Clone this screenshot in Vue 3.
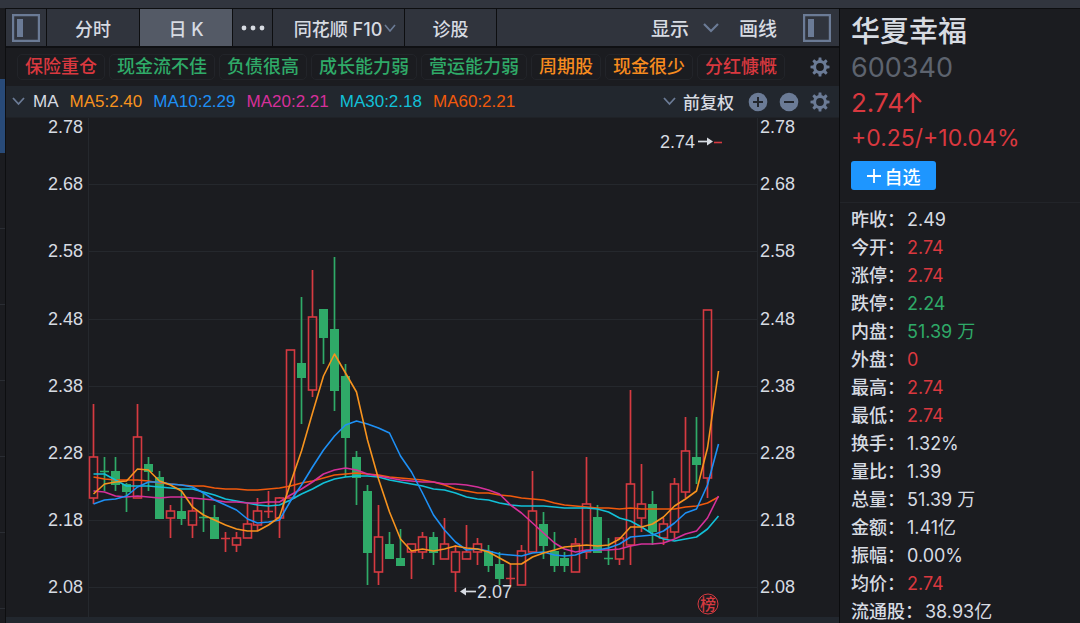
<script setup>
const tabs = [
  { label: '分时', cls: 'w-time' },
  { label: '日 K', cls: 'w-day', active: true },
  { label: '', cls: 'w-more', dots: true },
  { label: '同花顺 F10', cls: 'w-f10', caret: true },
  { label: '诊股', cls: 'w-diag' },
]

const tags = [
  ['保险重仓', 'red'],
  ['现金流不佳', 'green'],
  ['负债很高', 'green'],
  ['成长能力弱', 'green'],
  ['营运能力弱', 'green'],
  ['周期股', 'orange'],
  ['现金很少', 'orange'],
  ['分红慷慨', 'red'],
]

const legend = [
  ['MA5:2.40', 'ma5'],
  ['MA10:2.29', 'ma10'],
  ['MA20:2.21', 'ma20'],
  ['MA30:2.18', 'ma30'],
  ['MA60:2.21', 'ma60'],
]

const quotes = [
  ['昨收', '2.49', ''],
  ['今开', '2.74', 'red'],
  ['涨停', '2.74', 'red'],
  ['跌停', '2.24', 'green'],
  ['内盘', '51.39 万', 'green'],
  ['外盘', '0', 'red'],
  ['最高', '2.74', 'red'],
  ['最低', '2.74', 'red'],
  ['换手', '1.32%', ''],
  ['量比', '1.39', ''],
  ['总量', '51.39 万', ''],
  ['金额', '1.41亿', ''],
  ['振幅', '0.00%', ''],
  ['均价', '2.74', 'red'],
  ['流通股', '38.93亿', ''],
]

const axis = [
  ['2.78', 127],
  ['2.68', 184],
  ['2.58', 251],
  ['2.48', 319],
  ['2.38', 386],
  ['2.28', 453],
  ['2.18', 520],
  ['2.08', 587],
]

// direction, high, body top, body bottom, low
const candles = [
  ['r', 404, 457, 498, 504], ['g', 457, 471, 472, 491], ['g', 457, 471, 485, 491], ['g', 483, 484, 492, 512],
  ['r', 404, 437, 498, 498], ['g', 457, 464, 472, 491], ['g', 471, 477, 519, 519], ['r', 505, 511, 518, 538],
  ['g', 491, 511, 519, 525], ['r', 498, 511, 525, 538], ['g', 492, 517, 518, 532], ['g', 505, 517, 539, 539],
  ['r', 532, 538, 539, 552], ['r', 532, 538, 545, 552], ['r', 504, 524, 538, 538], ['r', 498, 511, 525, 531],
  ['r', 491, 511, 512, 518], ['r', 497, 498, 518, 538], ['r', 350, 350, 498, 498], ['g', 297, 363, 378, 424],
  ['r', 270, 317, 390, 397], ['g', 309, 309, 338, 364], ['g', 257, 329, 391, 411], ['g', 364, 376, 438, 477],
  ['g', 451, 457, 478, 505], ['g', 485, 491, 553, 585], ['r', 505, 537, 572, 585], ['g', 532, 544, 559, 559],
  ['g', 529, 558, 566, 566], ['r', 544, 544, 552, 579], ['r', 532, 537, 552, 559], ['g', 532, 537, 553, 565],
  ['r', 518, 544, 559, 559], ['r', 545, 552, 572, 592], ['r', 525, 552, 559, 559], ['r', 538, 544, 552, 565],
  ['g', 545, 551, 566, 572], ['g', 552, 564, 579, 585], ['r', 564, 578, 579, 585], ['r', 545, 551, 585, 585],
  ['r', 471, 511, 552, 552], ['g', 512, 524, 546, 559], ['g', 532, 551, 566, 572], ['g', 552, 558, 566, 572],
  ['r', 538, 544, 572, 572], ['r', 457, 504, 552, 559], ['g', 505, 517, 553, 553], ['g', 538, 558, 559, 565],
  ['r', 537, 538, 559, 565], ['r', 390, 484, 545, 565], ['r', 464, 504, 518, 532], ['g', 491, 504, 532, 545],
  ['r', 518, 524, 538, 545], ['r', 478, 484, 532, 538], ['r', 417, 451, 492, 498], ['g', 417, 457, 465, 484],
  ['r', 310, 310, 478, 498],
]

const averages = {
  ma60: [477, 479, 480, 480, 480, 481, 483, 484, 485, 486, 486, 488, 489, 489, 490, 490, 489, 488, 486, 483, 481, 478, 475, 474, 473, 474, 475, 477, 478, 479, 480, 482, 485, 489, 491, 493, 493, 495, 496, 498, 499, 500, 503, 505, 506, 507, 508, 508, 509, 508, 509, 509, 509, 509, 507, 506, 503, 497],
  ma30: [474, 474, 480, 486, 486, 486, 487, 488, 489, 489, 492, 495, 499, 501, 503, 505, 506, 505, 500, 494, 489, 483, 479, 477, 476, 476, 477, 480, 482, 484, 486, 489, 490, 493, 497, 499, 500, 503, 505, 506, 506, 506, 507, 508, 508, 508, 509, 512, 518, 521, 527, 534, 539, 541, 539, 537, 529, 516],
  ma20: [491, 492, 496, 497, 496, 497, 498, 497, 497, 498, 499, 500, 502, 502, 503, 503, 502, 502, 495, 489, 482, 474, 470, 468, 470, 474, 476, 478, 480, 481, 482, 482, 484, 484, 485, 487, 490, 494, 505, 513, 523, 533, 543, 549, 552, 550, 550, 550, 549, 546, 544, 544, 543, 539, 534, 531, 518, 496],
  ma10: [504, 500, 499, 496, 487, 482, 482, 484, 485, 487, 493, 500, 505, 510, 519, 523, 522, 520, 501, 485, 467, 450, 436, 425, 421, 424, 428, 433, 456, 472, 493, 515, 530, 542, 550, 549, 551, 554, 555, 556, 553, 552, 555, 556, 555, 551, 550, 548, 544, 537, 536, 535, 531, 523, 513, 509, 485, 444],
  ma5: [494, 484, 482, 481, 469, 470, 481, 485, 491, 507, 515, 520, 525, 529, 531, 531, 525, 517, 483, 451, 413, 376, 354, 373, 392, 440, 479, 512, 539, 551, 549, 551, 549, 546, 548, 549, 552, 558, 564, 564, 557, 553, 550, 547, 546, 545, 546, 545, 539, 527, 527, 524, 517, 506, 499, 491, 448, 371],
}

const pitch = (718 - 93) / 57
const cx = (i) => Math.round(93 + i * pitch)
const points = (ys) => ys.map((y, i) => `${cx(i) + 0.5},${y}`).join(' ')
</script>

<template>
  <div class="app">
    <div class="titlebar"></div>
    <aside class="rail"><i class="rail-active"></i><i v-for="n in 7" :key="n" class="rail-cell"></i></aside>

    <main class="main">
      <nav class="toolbar">
        <button class="tool w-panel" aria-label="左侧面板">
          <svg width="28" height="28" viewBox="0 0 28 28"><path d="M1 1H27V27H1Z" fill="none" stroke="#6b7b96" stroke-width="2.4" /><rect x="5" y="5" width="6" height="18" fill="#6b7b96" /></svg>
        </button>
        <button v-for="t in tabs" :key="t.cls" class="tool" :class="[t.cls, { active: t.active }]" :aria-label="t.label || '更多'">
          <span v-if="t.label">{{ t.label }}</span>
          <svg v-if="t.dots" width="26" height="6" viewBox="0 0 26 6" fill="#d7dbe2"><circle cx="4" cy="3" r="2.4" /><circle cx="13" cy="3" r="2.4" /><circle cx="22" cy="3" r="2.4" /></svg>
          <svg v-if="t.caret" width="12" height="8" viewBox="0 0 12 8"><path d="M1 1L6 7L11 1" fill="none" stroke="#6b7b96" stroke-width="1.6" /></svg>
        </button>
        <div class="tool-right">
          <button class="plain">显示
            <svg width="16" height="10" viewBox="0 0 16 10"><path d="M1 1L8 8L15 1" fill="none" stroke="#6b7b96" stroke-width="2.2" /></svg>
          </button>
          <button class="plain">画线</button>
          <button class="plain" aria-label="右侧面板">
            <svg width="28" height="28" viewBox="0 0 28 28"><path d="M1 1H27V27H1Z" fill="none" stroke="#6b7b96" stroke-width="2.4" /><rect x="5" y="5" width="6" height="18" fill="#6b7b96" /></svg>
          </button>
        </div>
      </nav>

      <div class="tags">
        <a v-for="t in tags" :key="t[0]" href="#" class="tag" :class="t[1]">{{ t[0] }}</a>
        <button class="plain gear" aria-label="标签设置">
          <svg width="20" height="20" viewBox="-10 -10 20 20"><circle r="5.4" fill="none" stroke="#6b7b96" stroke-width="3" /><path v-for="k in 8" :key="k" d="M-1.8 -6L-1.3 -9.5H1.3L1.8 -6Z" fill="#6b7b96" :transform="`rotate(${k * 45})`" /></svg>
        </button>
      </div>

      <div class="legend">
        <svg width="13" height="9" viewBox="0 0 13 9"><path d="M1 1L6.5 7L12 1" fill="none" stroke="#6b7b96" stroke-width="1.8" /></svg>
        <span class="ma">MA</span>
        <span v-for="l in legend" :key="l[0]" :class="l[1]">{{ l[0] }}</span>
        <div class="legend-right">
          <button class="plain fq">
            <svg width="13" height="9" viewBox="0 0 13 9"><path d="M1 1L6.5 7L12 1" fill="none" stroke="#6b7b96" stroke-width="1.8" /></svg>前复权
          </button>
          <button class="plain" aria-label="放大"><svg width="20" height="20" viewBox="0 0 20 20"><circle cx="10" cy="10" r="9.3" fill="#6b7b96" /><path d="M5 10H15M10 5V15" stroke="#22262d" stroke-width="2" /></svg></button>
          <button class="plain" aria-label="缩小"><svg width="20" height="20" viewBox="0 0 20 20"><circle cx="10" cy="10" r="9.3" fill="#6b7b96" /><path d="M5 10H15" stroke="#22262d" stroke-width="2" /></svg></button>
          <button class="plain" aria-label="指标设置">
            <svg width="20" height="20" viewBox="-10 -10 20 20"><circle r="5.4" fill="none" stroke="#6b7b96" stroke-width="3" /><path v-for="k in 8" :key="k" d="M-1.8 -6L-1.3 -9.5H1.3L1.8 -6Z" fill="#6b7b96" :transform="`rotate(${k * 45})`" /></svg>
          </button>
        </div>
      </div>

      <svg class="chart" viewBox="6 118 833 499" role="img" aria-label="日K线图">
        <g stroke="#25282d" stroke-width="1">
          <path v-for="a in axis.slice(1)" :key="a[0]" :d="`M89 ${a[1]}.5H757`" />
          <path d="M88.5 118V617M757.5 118V617" />
        </g>
        <g class="axis">
          <text v-for="a in axis" :key="a[0]" x="83" :y="a[1] + 6" text-anchor="end">{{ a[0] }}</text>
          <text v-for="a in axis" :key="'r' + a[0]" x="760" :y="a[1] + 6">{{ a[0] }}</text>
        </g>
        <g v-for="(c, i) in candles" :key="i" :stroke="c[0] === 'r' ? '#d63a41' : '#2faa68'">
          <template v-if="c[3] - c[2] < 2">
            <path :d="`M${cx(i) + 0.5} ${c[1]}V${c[4]}M${cx(i) - 4} ${c[2] + 0.5}H${cx(i) + 5}`" stroke-width="1.7" />
          </template>
          <template v-else>
            <path :d="`M${cx(i) + 0.5} ${c[1]}V${c[2]}M${cx(i) + 0.5} ${c[3]}V${c[4]}`" stroke-width="1.7" />
            <rect v-if="c[0] === 'r'" :x="cx(i) - 3.5" :y="c[2]" width="8" :height="c[3] - c[2]" fill="none" stroke-width="1.6" />
            <rect v-else :x="cx(i) - 4" :y="c[2]" width="9" :height="c[3] - c[2]" fill="#2faa68" stroke="none" />
          </template>
        </g>
        <path d="M714 142.5H722" stroke="#d63a41" stroke-width="1.6" />
        <polyline v-for="(ys, name) in averages" :key="name" :points="points(ys)" class="line" :class="name" />
        <g class="axis">
          <text x="695" y="148" text-anchor="end">2.74</text>
          <text x="477" y="598">2.07</text>
        </g>
        <g fill="none" stroke="#d7dbe2" stroke-width="1.7">
          <path d="M698 141.5H711" /><path d="M476 591.5H462" />
        </g>
        <path d="M707 137.5L713 141.5L707 145.5ZM466 587.5L460 591.5L466 595.5Z" fill="#d7dbe2" />
        <circle cx="708" cy="604" r="10" fill="none" stroke="#d63a41" stroke-width="1" />
        <text class="badge" x="708" y="610" text-anchor="middle">榜</text>
      </svg>
      <div class="footer"></div>
    </main>

    <section class="side">
      <header class="head">
        <h1>华夏幸福</h1>
        <p class="code">600340</p>
        <p class="price red">2.74<svg width="18" height="22" viewBox="0 0 18 22"><path d="M9 21V3M1 10L9 2L17 10" fill="none" stroke="currentColor" stroke-width="2.4" /></svg></p>
        <p class="delta red">+0.25/+10.04%</p>
        <button class="add"><svg width="14" height="14" viewBox="0 0 14 14"><path d="M0 7H14M7 0V14" stroke="#fff" stroke-width="1.8" /></svg>自选</button>
      </header>
      <dl class="quotes">
        <div v-for="q in quotes" :key="q[0]" class="row"><dt>{{ q[0] }}：</dt><dd :class="q[2]">{{ q[1] }}</dd></div>
      </dl>
    </section>
  </div>
</template>

<style>
html, body { background: #1b1c20; overflow: hidden; }
</style>

<style scoped>
* { box-sizing: border-box; }
.app {
  display: grid;
  grid-template-columns: 6px minmax(0, 1fr) 240px;
  grid-template-rows: 8px auto;
  height: 100vh;
  overflow: hidden;
  background: #1b1c20;
  color: #d7dbe2;
  font-family: Inter, "Noto Sans CJK SC", sans-serif;
  font-weight: 500;
}
button { font: inherit; color: inherit; border: 0; background: none; padding: 0; margin: 0; }
a { color: inherit; text-decoration: none; }
.red { color: #d9383f; }
.green { color: #2faa68; }
.orange { color: #f68b1f; }
.ma5 { color: #f7931e; stroke: #f7931e; }
.ma10 { color: #1e90f5; stroke: #1e90f5; }
.ma20 { color: #d6309a; stroke: #d6309a; }
.ma30 { color: #12c0d8; stroke: #12c0d8; }
.ma60 { color: #f15a0c; stroke: #f15a0c; }

.titlebar { grid-column: 1 / -1; background: #31353e; }
.rail { border-right: 1px solid #0d0e10; padding-top: 71px; background: #1b1c20; }
.rail i { display: block; }
.rail-active { height: 74px; background: #284a78; }
.rail-cell { height: 76px; border-bottom: 1px solid #2a2d33; }

.main { display: flex; flex-direction: column; border-right: 1px solid #0b0c0e; }
.toolbar {
  display: flex;
  height: 40px;
  border-top: 1px solid #0d0e10;
  border-bottom: 2px solid #0f1013;
  background: #30343d;
  font-size: 18px;
}
.tool { display: flex; align-items: center; justify-content: center; border-right: 1px solid #0d0e10; }
.active { background: #545a66; }
.w-panel { width: 41px; }
.w-time { width: 93px; }
.w-day { width: 93px; }
.w-more { width: 40px; }
.w-f10 { width: 132px; gap: 2px; padding-left: 13px; }
.w-diag { width: 92px; }
.tool-right { display: flex; align-items: center; gap: 20px; margin-left: auto; padding-right: 8px; font-size: 19px; }
.tool-right .plain { display: flex; align-items: center; gap: 14px; }
.tool-right .plain:last-child { margin-left: 6px; }

.tags { display: flex; align-items: center; gap: 4px; height: 38px; padding: 0 9px 0 11px; font-size: 18px; }
.tag { border: 1px solid #222429; border-radius: 5px; padding: 0 7px; line-height: 24px; white-space: nowrap; }
.gear { margin-left: auto; }
.plain svg { display: block; }

.legend {
  display: flex;
  align-items: center;
  gap: 11px;
  height: 32px;
  padding: 0 9px 0 6px;
  border-bottom: 1px solid #1f2227;
  background: #22272e;
  font-family: "Liberation Sans", "Noto Sans CJK SC", sans-serif;
  font-size: 17px;
}
.legend span { stroke: none; }
.ma { margin-left: -3px; }
.legend-right { display: flex; align-items: center; gap: 11px; margin-left: auto; }
.fq { display: flex; align-items: center; gap: 7px; margin-right: 3px; }

.chart { display: block; width: 100%; height: auto; }
.axis { font-family: "Liberation Sans", sans-serif; font-size: 18px; fill: #d7dbe2; }
.line { fill: none; stroke-width: 1.6; stroke-linejoin: round; }
.badge { font-family: "Noto Sans CJK SC", sans-serif; font-size: 16px; fill: #d63a41; }
.footer { flex: 1; background: #22272e; }

.side { border-top: 1px solid #0d0e10; }
.head { padding: 4px 11px 12px; border-bottom: 1px solid #222429; font-weight: 400; }
h1, p, dl, dd { margin: 0; }
h1 { font-size: 29px; line-height: 38px; font-weight: 500; }
.code { color: #5d636e; font-size: 27px; line-height: 34px; }
.price { display: flex; align-items: center; font-size: 26px; line-height: 36px; }
.delta { font-size: 23px; line-height: 34px; }
.add {
  display: flex;
  align-items: center;
  justify-content: center;
  gap: 4px;
  width: 85px;
  height: 29px;
  margin-top: 6px;
  border-radius: 3px;
  background: #1e96ff;
  color: #fff;
  font-size: 18px;
  font-weight: 500;
}
.quotes { padding: 3px 11px 0; font-weight: 400; }
.row { display: flex; gap: 2px; font-size: 18px; line-height: 28px; white-space: nowrap; }
.row dt { font-weight: 500; }
</style>
